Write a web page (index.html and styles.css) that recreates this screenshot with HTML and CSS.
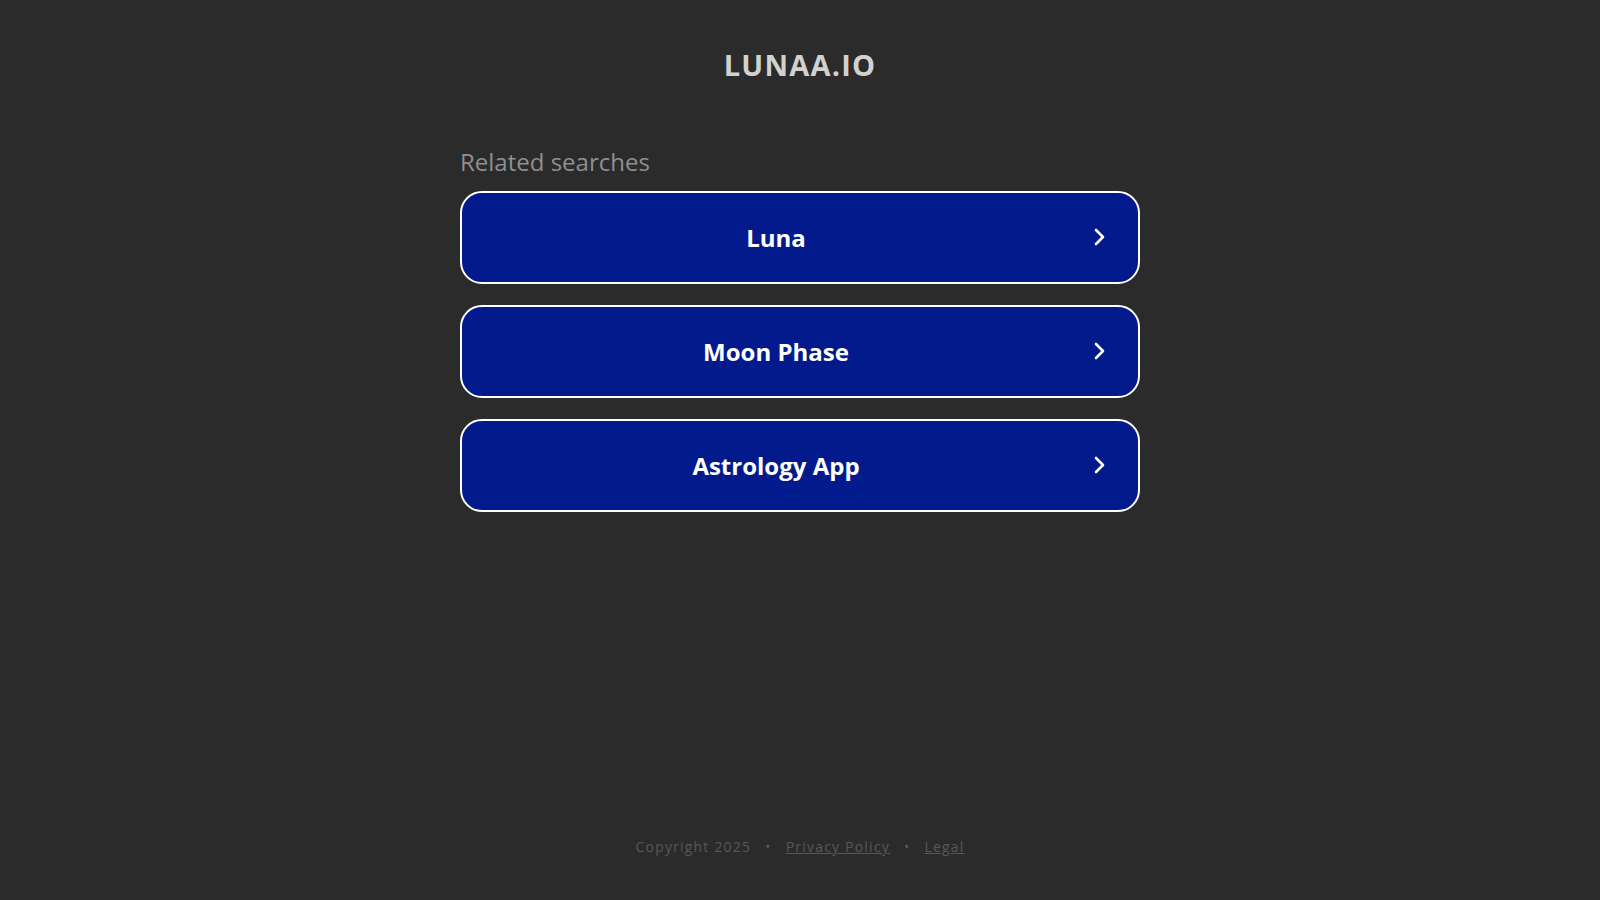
FILE: index.html
```html
<!DOCTYPE html>
<html lang="en">
<head>
<meta charset="utf-8">
<title>lunaa.io</title>
<link rel="stylesheet" href="styles.css">
</head>
<body>
<div class="page">
  <header class="header">
    <h1 class="domain">LUNAA.IO</h1>
  </header>
  <main class="content">
    <h2 class="related-title">Related searches</h2>
    <ul class="links">
      <li><a class="link" href="#"><span class="link-text">Luna</span><svg class="chev" viewBox="0 0 16 24" width="16" height="24"><path d="M4 5 L11 12 L4 19" fill="none" stroke="#fff" stroke-width="2.6" stroke-linecap="round" stroke-linejoin="round"/></svg></a></li>
      <li><a class="link" href="#"><span class="link-text">Moon Phase</span><svg class="chev" viewBox="0 0 16 24" width="16" height="24"><path d="M4 5 L11 12 L4 19" fill="none" stroke="#fff" stroke-width="2.6" stroke-linecap="round" stroke-linejoin="round"/></svg></a></li>
      <li><a class="link" href="#"><span class="link-text">Astrology App</span><svg class="chev" viewBox="0 0 16 24" width="16" height="24"><path d="M4 5 L11 12 L4 19" fill="none" stroke="#fff" stroke-width="2.6" stroke-linecap="round" stroke-linejoin="round"/></svg></a></li>
    </ul>
  </main>
  <footer class="footer">
    <span>Copyright 2025</span>
    <span class="dot">•</span>
    <a href="#">Privacy Policy</a>
    <span class="dot">•</span>
    <a href="#">Legal</a>
  </footer>
</div>
</body>
</html>
```

FILE: styles.css
```css
html, body {
  margin: 0;
  padding: 0;
  background: #2b2b2b;
  font-family: "Open Sans", "Noto Sans", sans-serif;
}

.page {
  height: 900px;
  display: flex;
  flex-direction: column;
  align-items: center;
}

.header {
  padding-top: 45px;
}

.domain {
  margin: 0;
  font-size: 29px;
  font-weight: 700;
  letter-spacing: 1.2px;
  color: #d1d1d1;
  line-height: 40px;
}

.content {
  width: 680px;
  margin-top: 60px;
}

.related-title {
  margin: 0 0 12px 0;
  font-size: 24px;
  font-weight: 400;
  color: #8f8f8f;
  line-height: 34px;
}

.links {
  list-style: none;
  margin: 0;
  padding: 0;
  display: flex;
  flex-direction: column;
  gap: 21px;
}

.link {
  position: relative;
  display: flex;
  align-items: center;
  justify-content: center;
  height: 89px;
  border: 2px solid #ffffff;
  border-radius: 22px;
  background: #021a8c;
  text-decoration: none;
  color: #ffffff;
}

.link-text {
  font-size: 24px;
  font-weight: 700;
  margin-right: 48px;
}

.chev {
  position: absolute;
  right: 30px;
  top: 50%;
  margin-top: -13px;
}

.footer {
  margin-top: auto;
  margin-bottom: 44px;
  display: flex;
  gap: 14px;
  font-size: 14px;
  letter-spacing: 1.2px;
  color: #585858;
}

.footer a {
  color: #585858;
  text-decoration: underline;
}
```
